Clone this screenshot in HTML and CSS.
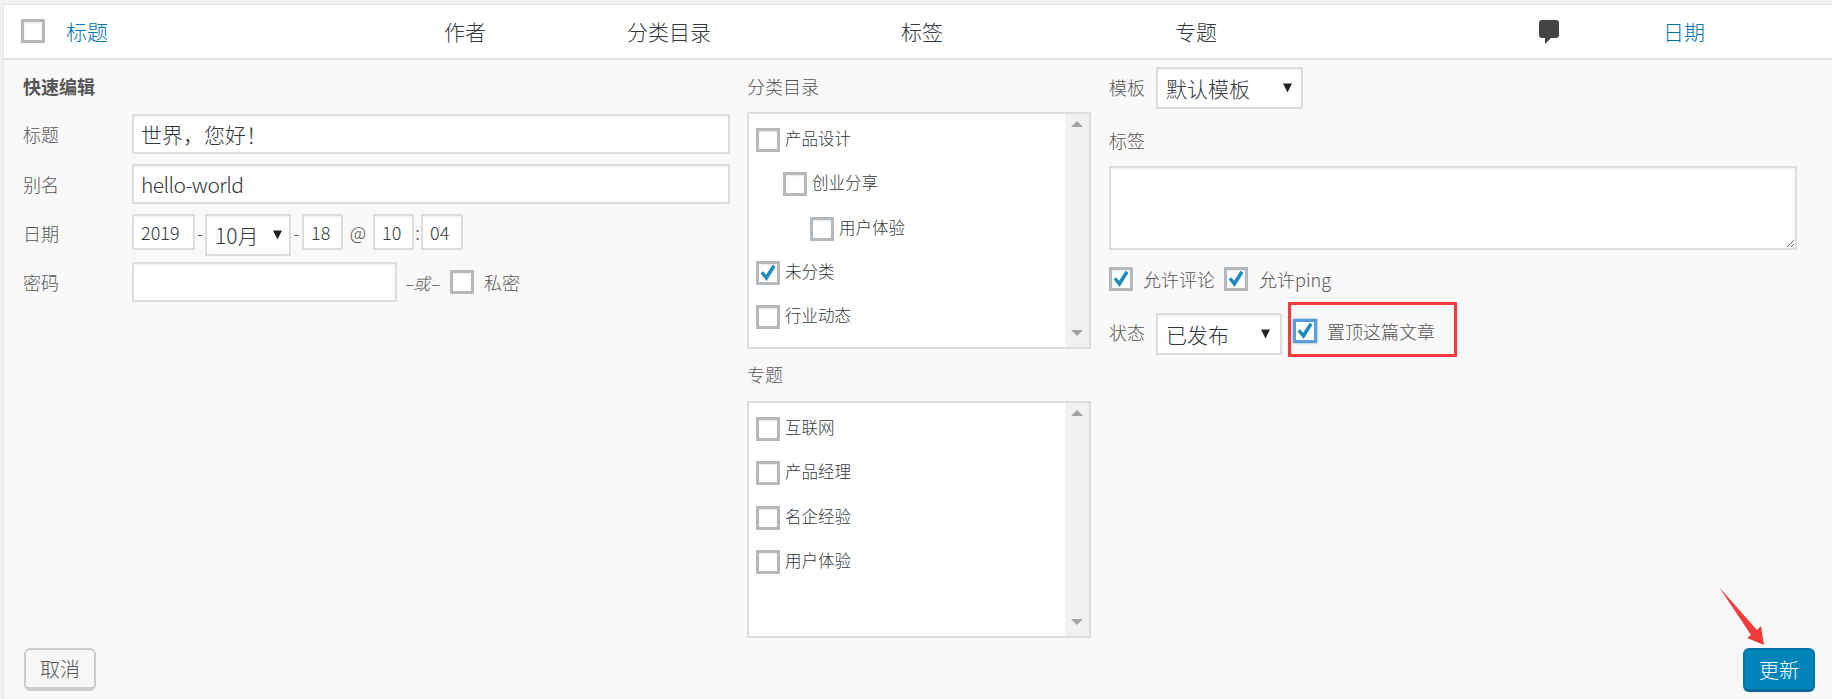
FILE: index.html
```html
<!DOCTYPE html>
<html lang="zh-CN">
<head>
<meta charset="utf-8">
<title>快速编辑</title>
<link rel="stylesheet" href="styles.css">
</head>
<body>
<div class="page">
  <div class="head">
    <div class="hc"><input type="checkbox" class="cb"></div>
    <a class="hc link">标题</a>
    <div class="hc">作者</div>
    <div class="hc">分类目录</div>
    <div class="hc">标签</div>
    <div class="hc">专题</div>
    <div class="hc"><svg class="bubble" width="20" height="24" viewBox="0 0 20 24"><path d="M3 0h14a3 3 0 0 1 3 3v12a3 3 0 0 1-3 3h-5l-6 6v-6H3a3 3 0 0 1-3-3V3a3 3 0 0 1 3-3z"/></svg></div>
    <a class="hc link">日期</a>
  </div>
  <form class="panel">
    <div class="cols">
      <div class="col col-left">
        <div class="legend">快速编辑</div>
        <label class="field"><span class="lab">标题</span><input class="text" value="世界，您好！"></label>
        <label class="field"><span class="lab">别名</span><input class="text text-latin" value="hello-world"></label>
        <div class="date-row">
          <span class="lab lab-date">日期</span>
          <input class="small w-year" value="2019"><span class="sep">-</span>
          <select class="sel w-mon"><option>10月</option></select><span class="sep sep-2">-</span>
          <input class="small w-two" value="18"><span class="at">@</span>
          <input class="small w-two" value="10"><span class="colon">:</span>
          <input class="small w-min" value="04">
        </div>
        <div class="pass-row">
          <span class="lab">密码</span>
          <input class="text w-pass">
          <em class="or">–或–</em>
          <input type="checkbox" class="cb">
          <span class="pv">私密</span>
        </div>
      </div>
      <div class="col col-mid">
        <div class="title">分类目录</div>
        <div class="box">
          <ul class="list">
            <li class="item"><input type="checkbox" class="cb"><span>产品设计</span></li>
            <li class="item lv1"><input type="checkbox" class="cb"><span>创业分享</span></li>
            <li class="item lv2"><input type="checkbox" class="cb"><span>用户体验</span></li>
            <li class="item"><input type="checkbox" class="cb" checked><span>未分类</span></li>
            <li class="item"><input type="checkbox" class="cb"><span>行业动态</span></li>
          </ul>
          <div class="bar"><i class="up"></i><i class="down"></i></div>
        </div>
        <div class="title title-2">专题</div>
        <div class="box">
          <ul class="list">
            <li class="item"><input type="checkbox" class="cb"><span>互联网</span></li>
            <li class="item"><input type="checkbox" class="cb"><span>产品经理</span></li>
            <li class="item"><input type="checkbox" class="cb"><span>名企经验</span></li>
            <li class="item"><input type="checkbox" class="cb"><span>用户体验</span></li>
          </ul>
          <div class="bar"><i class="up"></i><i class="down"></i></div>
        </div>
      </div>
      <div class="col col-right">
        <div class="sel-row">
          <span class="lab-r">模板</span>
          <select class="sel w-tpl"><option>默认模板</option></select>
        </div>
        <div class="title title-tags">标签</div>
        <textarea class="tags"></textarea>
        <div class="check-row">
          <input type="checkbox" class="cb" checked><span class="t1">允许评论</span>
          <input type="checkbox" class="cb" checked><span class="t2">允许ping</span>
        </div>
        <div class="sel-row status-row">
          <span class="lab-r">状态</span>
          <select class="sel w-status"><option>已发布</option></select>
          <span class="sticky">
            <input type="checkbox" class="cb focus" checked><span class="t3">置顶这篇文章</span>
            <i class="redbox"></i>
          </span>
        </div>
      </div>
    </div>
    <div class="foot">
      <button type="button" class="btn">取消</button>
      <button type="button" class="btn primary">更新</button>
    </div>
    <svg class="arrow" width="60" height="70" viewBox="0 0 60 70"><path d="M2 2L40 45 44 41 47 60 30 53 34 50z"/></svg>
  </form>
</div>
</body>
</html>
```
FILE: styles.css
```css
* { box-sizing: border-box; }
html, body { margin: 0; padding: 0; }
body {
  background: #f1f1f1;
  font-family: "Noto Sans CJK SC", "Noto Sans", sans-serif;
  font-weight: 300;
  color: #555;
  overflow: hidden;
}
.page {
  width: 1832px;
  height: 699px;
  padding: 4px 0 0 3px;
}
.head {
  display: grid;
  grid-template-columns: 45px 378px 183px 274px 274px 364px 124px 1fr;
  align-items: center;
  height: 56px;
  padding-left: 17px;
  background: #fff;
  border-top: 1px solid #e5e5e5;
  border-left: 1px solid #e5e5e5;
  border-bottom: 2px solid #e1e1e1;
  font-size: 21px;
  color: #32373c;
}
.hc { display: flex; align-items: center; line-height: 30px; margin-top: -1px; }
.link { color: #0073aa; }
.bubble { fill: #444; display: block; margin-top: 2px; }

.cb {
  appearance: none;
  -webkit-appearance: none;
  flex: none;
  display: block;
  width: 24px;
  height: 24px;
  margin: 0;
  background: #fff;
  border: 3px solid #b4b9be;
  box-shadow: inset 0 1px 2px rgba(0,0,0,.1);
}
.cb:checked {
  background: #fff url("data:image/svg+xml,%3Csvg xmlns='http://www.w3.org/2000/svg' viewBox='0 0 18 18'%3E%3Cpath fill='%231e8cbe' d='M1.5 9.2l2.6-2 3 3.6L13.6.8l2.9 1.9L7.6 17z'/%3E%3C/svg%3E") center/18px 18px no-repeat;
}
.cb.focus { border-color: #5b9dd9; box-shadow: 0 0 2px rgba(30,140,190,.8); }

.panel {
  position: relative;
  height: 639px;
  padding: 7px 17px 0 19px;
  background: #f9f9f9;
  border-left: 1px solid #e5e5e5;
}
.cols {
  display: grid;
  grid-template-columns: 707px 344px 688px;
  column-gap: 17px;
  height: 581px;
}
.col-left, .col-mid { padding-top: 7px; }
.col-right { margin-left: 1px; }
.legend, .title, .lab, .lab-r { font-size: 18px; line-height: 24px; }
.legend { font-weight: 700; margin-bottom: 16px; }
.lab { flex: none; width: 109px; }

.field { display: flex; align-items: center; margin-bottom: 10px; }
.text, .small, .sel, .tags {
  display: block;
  margin: 0;
  background: #fff;
  border: 2px solid #ddd;
  border-radius: 0;
  box-shadow: inset 0 1px 2px rgba(0,0,0,.07);
  color: #32373c;
  font-family: inherit;
  font-weight: 300;
  outline: none;
}
.text { width: 598px; height: 40px; padding: 0 7px; font-size: 21px; }
.text-latin { letter-spacing: -.6px; }
.small { height: 36px; padding: 0 7px; font-size: 18px; }
.w-year { width: 63px; }
.w-two { width: 41px; }
.w-min { width: 42px; }
.sel {
  appearance: none;
  -webkit-appearance: none;
  height: 42px;
  padding: 0 8px;
  font-size: 21px;
  background: #fff url("data:image/svg+xml,%3Csvg xmlns='http://www.w3.org/2000/svg' viewBox='0 0 10 10'%3E%3Cpath fill='%23222' d='M0 0h10L5 10z'/%3E%3C/svg%3E") no-repeat;
  background-size: 9px 10px;
}
.w-mon { width: 86px; background-position: 66px 14px; }
.w-tpl { width: 147px; background-position: 125px 14px; }
.w-status { width: 126px; background-position: 103px 14px; }

.date-row { display: flex; align-items: flex-start; height: 48px; }
.lab-date { line-height: 36px; margin-top: 1px; }
.sep { width: 10px; text-align: center; line-height: 36px; font-size: 18px; }
.sep-2 { width: 11px; }
.at { width: 30px; text-align: center; line-height: 36px; font-size: 18px; }
.colon { width: 7px; text-align: center; line-height: 36px; font-size: 18px; }
.pass-row { display: flex; align-items: center; height: 40px; }
.w-pass { width: 265px; }
.or { width: 53px; padding-left: 7px; font-size: 17px; }
.pv { margin-left: 10px; font-size: 18px; }

.title { margin-bottom: 14px; }
.title-2 { margin-top: 13px; margin-bottom: 15px; }
.box {
  display: flex;
  height: 237px;
  background: #fff;
  border: 2px solid #ddd;
}
.list { flex: 1; list-style: none; margin: 0; padding: 14px 0 0 7px; }
.item {
  display: flex;
  align-items: flex-start;
  height: 44.3px;
  gap: 5px;
  font-size: 16.5px;
  line-height: 20px;
  color: #32373c;
}
.lv1 { padding-left: 27px; }
.lv2 { padding-left: 54px; }
.bar {
  position: relative;
  flex: none;
  width: 24px;
  background: #f1f1f1;
}
.up, .down {
  position: absolute;
  left: 6px;
  width: 0;
  height: 0;
  border-left: 6px solid transparent;
  border-right: 6px solid transparent;
}
.up { top: 7px; border-bottom: 6px solid #a3a3a3; }
.down { bottom: 11px; border-top: 6px solid #a3a3a3; }

.sel-row { display: flex; align-items: center; }
.sel-row .lab-r { margin-top: -2px; }
.lab-r { width: 47px; flex: none; }
.title-tags { margin-top: 19px; }
.tags { width: 688px; height: 84px; resize: both; }
.check-row {
  display: flex;
  align-items: center;
  margin-top: 17px;
  font-size: 18px;
  height: 24px;
}
.t1 { margin: 0 9px 0 10px; }
.t2 { margin-left: 11px; }
.status-row { margin-top: 22px; align-items: flex-start; }
.status-row .lab-r { line-height: 42px; margin-top: -2px; }
.sticky {
  position: relative;
  display: flex;
  align-items: center;
  margin: 6px 0 0 11px;
  font-size: 18px;
  line-height: 24px;
}
.t3 { margin-left: 10px; }
.redbox {
  position: absolute;
  left: -5px;
  top: -17px;
  width: 169px;
  height: 55px;
  border: 3px solid #f33b3b;
}

.foot {
  display: flex;
  justify-content: space-between;
  align-items: flex-start;
  padding-left: 1px;
}
.btn {
  width: 72px;
  height: 43px;
  margin: 0;
  padding: 0;
  font-family: inherit;
  font-weight: 300;
  font-size: 20px;
  color: #555;
  background: #f7f7f7;
  border: 2px solid #ccc;
  border-bottom-width: 4px;
  border-radius: 6px;
}
.primary {
  height: 44px;
  color: #fff;
  background: #0085ba;
  border: 2px solid #0073aa;
  border-bottom: 3px solid #006799;
}
.arrow {
  position: absolute;
  right: 55px;
  bottom: 44px;
  fill: #f33b3b;
}
```
